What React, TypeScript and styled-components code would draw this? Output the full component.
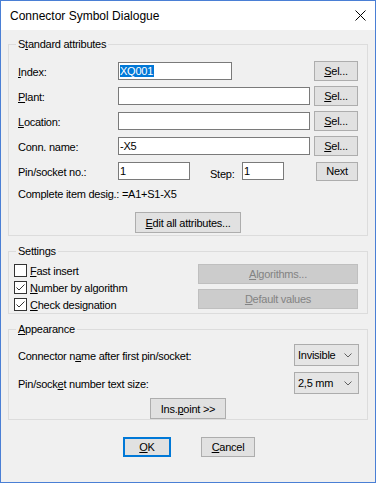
import styled, { createGlobalStyle } from "styled-components";

const GlobalStyle = createGlobalStyle`
  html, body {
    margin: 0;
    padding: 0;
    background: #f0f0f0;
  }
  * {
    box-sizing: border-box;
  }
`;

const Window = styled.div`
  width: 376px;
  height: 483px;
  border: 1px solid #4a7fd5;
  background: #f0f0f0;
  display: flex;
  flex-direction: column;
  font-family: "Liberation Sans", Arial, sans-serif;
  font-size: 11px;
  letter-spacing: -0.25px;
  color: #000;
`;

const TitleBar = styled.div`
  height: 29px;
  background: #fff;
  display: flex;
  align-items: center;
  justify-content: space-between;
  padding: 0 9px 0 9px;
`;

const Title = styled.span`
  font-size: 12px;
  letter-spacing: 0;
`;

const Body = styled.div`
  padding: 7px 7px 0 7px;
  display: flex;
  flex-direction: column;
`;

const Group = styled.fieldset<{ $gap?: number; $top: number }>`
  margin: ${(p) => p.$gap || 0}px 0 0 0;
  padding: ${(p) => p.$top}px 9px 0 9px;
  border: 1px solid #dcdcdc;
  min-width: 0;
`;

const Legend = styled.legend`
  padding: 0 2px;
  margin-left: -2px;
  line-height: 15px;
`;

const Rows = styled.div`
  display: flex;
  flex-direction: column;
  gap: 5px;
`;

const Row = styled.div`
  display: flex;
  align-items: center;
  height: 20px;
`;

const Label = styled.span<{ $w?: number; $ml?: number; $dy?: number }>`
  width: ${(p) => (p.$w ? `${p.$w}px` : "auto")};
  margin-left: ${(p) => p.$ml || 0}px;
  padding-top: ${(p) => p.$dy ?? 2}px;
  white-space: nowrap;
`;

const TextBox = styled.div<{ $w: number }>`
  width: ${(p) => p.$w}px;
  height: 18px;
  border: 1px solid #7a7a7a;
  background: #fff;
  padding: 0 1px;
  line-height: 16px;
  white-space: nowrap;
  overflow: hidden;
`;

const Selected = styled.span`
  background: #0078d7;
  color: #fff;
  padding-right: 1px;
`;

const Button = styled.div<{ $w: number; $h?: number; $disabled?: boolean; $default?: boolean }>`
  width: ${(p) => p.$w}px;
  height: ${(p) => p.$h || 20}px;
  display: flex;
  align-items: center;
  justify-content: center;
  background: ${(p) => (p.$disabled ? "#cccccc" : "#e1e1e1")};
  border: ${(p) =>
    p.$default ? "2px solid #0078d7" : p.$disabled ? "1px solid #bfbfbf" : "1px solid #adadad"};
  color: ${(p) => (p.$disabled ? "#838383" : "#000")};
  white-space: nowrap;
`;

const PushRight = styled.div`
  margin-left: auto;
  display: flex;
`;

const InfoLine = styled.div`
  margin-top: 6px;
  height: 14px;
  line-height: 14px;
`;

const Centered = styled.div<{ $mt: number; $mb?: number }>`
  display: flex;
  justify-content: center;
  margin-top: ${(p) => p.$mt}px;
  margin-bottom: ${(p) => p.$mb || 0}px;
`;

const SettingsGrid = styled.div`
  display: flex;
`;

const CheckList = styled.div`
  margin-left: -4px;
  display: flex;
  flex-direction: column;
`;

const CheckRow = styled.div`
  height: 17px;
  display: flex;
  align-items: center;
  gap: 3px;
`;

const Box = styled.div`
  width: 13px;
  height: 13px;
  border: 1px solid #333;
  background: #fff;
  display: flex;
  align-items: center;
  justify-content: center;
`;

const SideButtons = styled.div`
  margin-left: auto;
  margin-top: 2px;
  display: flex;
  flex-direction: column;
  gap: 5px;
`;

const AppearRows = styled.div`
  display: flex;
  flex-direction: column;
  gap: 6px;
`;

const AppearRow = styled.div`
  display: flex;
  align-items: center;
  justify-content: space-between;
  height: 22px;
`;

const Combo = styled.div`
  width: 65px;
  height: 22px;
  border: 1px solid #acacac;
  background: #e5e5e5;
  display: flex;
  align-items: center;
  justify-content: space-between;
  padding: 0 6px 0 3px;
  margin-right: -1px;
`;

const Footer = styled.div`
  display: flex;
  justify-content: center;
  gap: 30px;
  margin-top: 17px;
  padding-left: 2px;
`;

const U = styled.span`
  text-decoration: underline;
`;

function Check({ on }: { on: boolean }) {
  return (
    <Box>
      {on ? (
        <svg width="11" height="11" viewBox="0 0 11 11">
          <polyline points="1.5,5.5 4,8 9.5,2.5" fill="none" stroke="#333" strokeWidth="1" />
        </svg>
      ) : null}
    </Box>
  );
}

function Chevron() {
  return (
    <svg width="8" height="5" viewBox="0 0 8 5">
      <path d="M0.5 0.5 L4 4 L7.5 0.5" fill="none" stroke="#606060" strokeWidth="1" />
    </svg>
  );
}

const fields = [
  { label: <><U>P</U>lant:</>, value: "" },
  { label: <><U>L</U>ocation:</>, value: "" },
  { label: <>Conn. name:</>, value: "-X5" },
];

export default function App() {
  return (
    <>
      <GlobalStyle />
      <Window>
        <TitleBar>
          <Title>Connector Symbol Dialogue</Title>
          <svg width="11" height="11" viewBox="0 0 11 11">
            <path d="M0.5 0.5 L10.5 10.5 M10.5 0.5 L0.5 10.5" stroke="#000" strokeWidth="1" />
          </svg>
        </TitleBar>
        <Body>
          <Group $top={9}>
            <Legend>
              S<U>t</U>andard attributes
            </Legend>
            <Rows>
              <Row>
                <Label $w={100}>
                  <U>I</U>ndex:
                </Label>
                <TextBox $w={114}>
                  <Selected>XQ001</Selected>
                </TextBox>
                <PushRight>
                  <Button $w={44}>
                    <U>S</U>el...
                  </Button>
                </PushRight>
              </Row>
              {fields.map((f, i) => (
                <Row key={i}>
                  <Label $w={100}>{f.label}</Label>
                  <TextBox $w={192}>{f.value}</TextBox>
                  <PushRight>
                    <Button $w={44}>
                      <U>S</U>el...
                    </Button>
                  </PushRight>
                </Row>
              ))}
              <Row>
                <Label $w={100}>Pin/socket no.:</Label>
                <TextBox $w={72}>1</TextBox>
                <Label $w={32} $ml={20} $dy={5}>
                  Step:
                </Label>
                <TextBox $w={42}>1</TextBox>
                <PushRight>
                  <Button $w={42} $h={19}>
                    Next
                  </Button>
                </PushRight>
              </Row>
            </Rows>
            <InfoLine>Complete item desig.: =A1+S1-X5</InfoLine>
            <Centered $mt={11} $mb={2}>
              <Button $w={106} $h={21}>
                <U>E</U>dit all attributes...
              </Button>
            </Centered>
          </Group>

          <Group $gap={8} $top={3}>
            <Legend>Settings</Legend>
            <SettingsGrid>
              <CheckList>
                <CheckRow>
                  <Check on={false} />
                  <span>
                    <U>F</U>ast insert
                  </span>
                </CheckRow>
                <CheckRow>
                  <Check on />
                  <span>
                    <U>N</U>umber by algorithm
                  </span>
                </CheckRow>
                <CheckRow>
                  <Check on />
                  <span>
                    <U>C</U>heck designation
                  </span>
                </CheckRow>
              </CheckList>
              <SideButtons>
                <Button $w={160} $disabled>
                  <U>A</U>lgorithms...
                </Button>
                <Button $w={160} $disabled>
                  <U>D</U>efault values
                </Button>
              </SideButtons>
            </SettingsGrid>
          </Group>

          <Group $gap={8} $top={7}>
            <Legend>
              <U>A</U>ppearance
            </Legend>
            <AppearRows>
              <AppearRow>
                <Label>
                  Connector n<U>a</U>me after first pin/socket:
                </Label>
                <Combo>
                  <span>Invisible</span>
                  <Chevron />
                </Combo>
              </AppearRow>
              <AppearRow>
                <Label>
                  Pin/sock<U>e</U>t number text size:
                </Label>
                <Combo>
                  <span>2,5 mm</span>
                  <Chevron />
                </Combo>
              </AppearRow>
            </AppearRows>
            <Centered $mt={4}>
              <Button $w={76} $h={21}>
                Ins.<U>p</U>oint &gt;&gt;
              </Button>
            </Centered>
          </Group>

          <Footer>
            <Button $w={48} $default>
              <U>O</U>K
            </Button>
            <Button $w={54}>
              <U>C</U>ancel
            </Button>
          </Footer>
        </Body>
      </Window>
    </>
  );
}
